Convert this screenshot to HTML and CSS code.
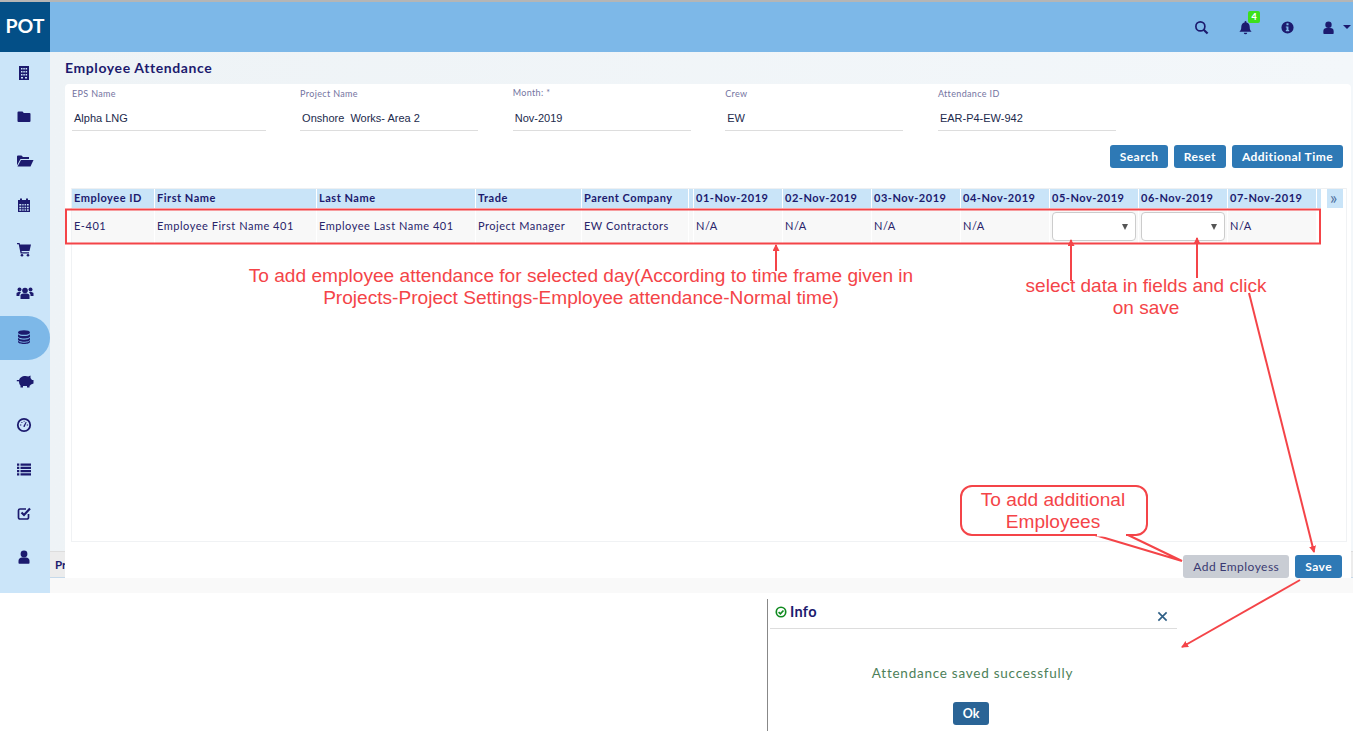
FILE: index.html
```html
<!DOCTYPE html>
<html lang="en">
<head>
<meta charset="utf-8">
<title>Employee Attendance</title>
<link rel="stylesheet" href="styles.css">
</head>
<body>
<div class="app">
  <aside class="sidebar">
    <div class="logo">POT</div>
    <nav class="nav">
      <a class="nav-item"><svg class="ico" viewBox="0 0 16 16"><path fill-rule="evenodd" d="M3 1h10v14H3zM5 3v1.5h1.500V3zM7.300 3v1.500h1.500V3zM9.600 3v1.500h1.500V3zM5 6v1.500h1.500V6zM7.300 6v1.500h1.500V6zM9.600 6v1.500h1.500V6zM5 9v1.500h1.500V9zM7.300 9v1.500h1.500V9zM9.600 9v1.500h1.500V9zM5 12v1.500h2V12zM9 12v1.500h2V12z"/></svg></a>
      <a class="nav-item"><svg class="ico" viewBox="0 0 16 16"><path d="M1.500 3.500a1 1 0 0 1 1-1h4l1.300 1.500h5.700a1 1 0 0 1 1 1v7a1 1 0 0 1-1 1h-11a1 1 0 0 1-1-1z"/></svg></a>
      <a class="nav-item"><svg class="ico ico-wide" viewBox="0 0 18 16"><path d="M1 12.500V3.500a1 1 0 0 1 1-1h3.500L7 4h6v2H4.500z"/><path d="M5 7h12.500l-3 6.500H1.500z"/></svg></a>
      <a class="nav-item"><svg class="ico" viewBox="0 0 16 16"><path fill-rule="evenodd" d="M2 3h2V1.500h2V3h4V1.500h2V3h2v12H2zM3.300 7v1.600h2V7zM6.300 7v1.600h1.300V7zM8.600 7v1.600h1.300V7zM10.900 7v1.600h1.800V7zM3.300 9.700v1.600h2V9.700zM6.300 9.700v1.600h1.300V9.700zM8.600 9.700v1.600h1.300V9.700zM10.900 9.700v1.600h1.800V9.700zM3.300 12.300v1.500h2v-1.500zM6.300 12.300v1.500h1.300v-1.500zM8.600 12.300v1.500h1.300v-1.500zM10.900 12.300v1.500h1.800v-1.500z"/></svg></a>
      <a class="nav-item"><svg class="ico" viewBox="0 0 16 16"><path d="M1 2h2.600l.4 1.500h11l-1.500 6.500H5.500l.3 1.300H13v1.200H4.600L2.700 3.200H1z"/><circle cx="6" cy="14.300" r="1.300"/><circle cx="12" cy="14.300" r="1.300"/></svg></a>
      <a class="nav-item"><svg class="ico ico-wide" viewBox="0 0 18 16"><circle cx="9" cy="5.500" r="2.800"/><circle cx="3.500" cy="4.500" r="2"/><circle cx="14.500" cy="4.500" r="2"/><path d="M4.500 14v-3.500C4.500 9 6 8.500 9 8.500s4.500.5 4.500 2V14z"/><path d="M0.500 11V8.500C.5 7.500 2 7 3.500 7H5L3.500 9.500V11zM17.500 11V8.500c0-1-1.500-1.500-3-1.500H13l1.500 2.500V11z"/></svg></a>
      <a class="nav-item nav-active"><svg class="ico" viewBox="0 0 16 16"><ellipse cx="8" cy="3.500" rx="6" ry="2.300"/><path d="M2 5.200c1 1.300 3.300 1.900 6 1.900s5-.6 6-1.900v2c0 1.300-2.700 2.300-6 2.300s-6-1-6-2.300z"/><path d="M2 8.800c1 1.300 3.300 1.900 6 1.900s5-.6 6-1.900v1.600c0 1.300-2.700 2.300-6 2.300s-6-1-6-2.300z"/><path d="M2 11.800c1 1.300 3.300 1.900 6 1.900s5-.6 6-1.900v1c0 1.300-2.700 2.300-6 2.300s-6-1-6-2.300z"/></svg></a>
      <a class="nav-item"><svg class="ico ico-wide" viewBox="0 0 18 16"><path d="M3 8c0-3 3-5 6.500-5 1 0 2 .2 2.800.5L14.500 2.500V5l1.500 2h1.500v3.500L15 11.500 13.500 13v1.500h-2.500V13H7v1.500H4.500V12.500C3.500 11.500 3 10 3 8z"/><path d="M.8 7h2.700v1.300H.8z"/></svg></a>
      <a class="nav-item"><svg class="ico" viewBox="0 0 16 16"><circle cx="8" cy="8" r="6.200" fill="none" stroke-width="1.800" class="ico-stroke"/><path d="M7.300 9.200 9.800 4.800l.8.400-2 4.700a1 1 0 0 1-1.300-.7z"/><path d="M4 7.500h1.300v1H4zM10.800 7.500h1.300v1h-1.300zM5.400 5h1v1h-1zM7.600 3.800h1v1h-1z"/></svg></a>
      <a class="nav-item"><svg class="ico" viewBox="0 0 16 16"><path d="M1 2.500h2.300v2.200H1zM4.500 2.500h10.500v2.200H4.500zM1 5.800h2.300V8H1zM4.500 5.800h10.500V8H4.500zM1 9h2.300v2.200H1zM4.500 9h10.500v2.200H4.500zM1 12.300h2.300v2.200H1zM4.500 12.300h10.500v2.200H4.500z"/></svg></a>
      <a class="nav-item"><svg class="ico" viewBox="0 0 16 16"><path class="ico-stroke" fill="none" stroke-width="1.700" d="M12.500 9v3.500a1.500 1.500 0 0 1-1.500 1.500H4a1.500 1.500 0 0 1-1.500-1.500V5.500A1.500 1.500 0 0 1 4 4h6"/><path class="ico-stroke" fill="none" stroke-width="2.200" d="M5.500 7.500 8 10l6-6.500"/></svg></a>
      <a class="nav-item"><svg class="ico" viewBox="0 0 16 16"><circle cx="8" cy="5" r="3.400"/><path d="M2.500 14v-2.200C2.500 9.800 4 8.500 6 8.500h4c2 0 3.500 1.300 3.500 3.300V14a.8.8 0 0 1-.8.8H3.300a.8.8 0 0 1-.8-.8z"/></svg></a>
    </nav>
  </aside>
  <div class="main">
    <header class="topbar">
      <svg class="top-ico top-search" viewBox="0 0 16 16"><circle class="ico-stroke" cx="6.800" cy="6.800" r="4.800" fill="none" stroke-width="1.800"/><path class="ico-stroke" fill="none" stroke-width="2.300" d="M10.300 10.300 14.500 14.500"/></svg>
      <span class="bell-wrap">
        <svg class="top-ico" viewBox="0 0 16 16"><path d="M8 1a1 1 0 0 1 1 1v.6c2.300.5 3.500 2.300 3.500 4.900 0 2.500.6 3.800 2 5H1.500c1.400-1.200 2-2.500 2-5 0-2.600 1.200-4.400 3.500-4.900V2a1 1 0 0 1 1-1z"/><path d="M6.200 13.500h3.600a1.800 1.800 0 0 1-3.600 0z"/></svg>
        <span class="badge">4</span>
      </span>
      <svg class="top-ico top-info" viewBox="0 0 16 16"><path fill-rule="evenodd" d="M8 1.500a6.500 6.500 0 1 1 0 13 6.500 6.500 0 0 1 0-13zM6.900 3.500v2h2.200v-2zM6.200 6.800V8h.8v2.700h-.8v1.300h3.600v-1.300h-.8V6.800z"/></svg>
      <svg class="top-ico top-user" viewBox="0 0 16 16"><circle cx="8" cy="5" r="3.400"/><path d="M2.500 14v-2.200C2.500 9.800 4 8.500 6 8.500h4c2 0 3.500 1.300 3.500 3.300V14a.8.8 0 0 1-.8.8H3.300a.8.8 0 0 1-.8-.8z"/></svg>
      <span class="caret"></span>
    </header>
    <h1 class="page-title">Employee Attendance</h1>
    <div class="content">
      <div class="gutter"><span class="tab">Pr</span></div>
      <section class="card">
        <div class="filters">
          <div class="field"><label class="field-label">EPS Name</label><div class="field-value">Alpha LNG</div></div>
          <div class="field"><label class="field-label">Project Name</label><div class="field-value">Onshore&nbsp; Works- Area 2</div></div>
          <div class="field"><label class="field-label field-label-up">Month: *</label><div class="field-value">Nov-2019</div></div>
          <div class="field"><label class="field-label">Crew</label><div class="field-value">EW</div></div>
          <div class="field"><label class="field-label">Attendance ID</label><div class="field-value">EAR-P4-EW-942</div></div>
        </div>
        <div class="actions">
          <button class="btn btn-search">Search</button>
          <button class="btn">Reset</button>
          <button class="btn">Additional Time</button>
        </div>
        <div class="table-box">
          <div class="t-row t-head">
            <div>Employee ID</div><div>First Name</div><div>Last Name</div><div>Trade</div><div>Parent Company</div><div></div>
            <div>01-Nov-2019</div><div>02-Nov-2019</div><div>03-Nov-2019</div><div>04-Nov-2019</div><div>05-Nov-2019</div><div>06-Nov-2019</div><div>07-Nov-2019</div><div></div><div class="t-blank"></div><div class="t-more">»</div>
          </div>
          <div class="t-row t-body">
            <div>E-401</div><div>Employee First Name 401</div><div>Employee Last Name 401</div><div>Project Manager</div><div>EW Contractors</div><div></div>
            <div>N/A</div><div>N/A</div><div>N/A</div><div>N/A</div>
            <div class="t-select-cell"><span class="t-select"></span></div>
            <div class="t-select-cell"><span class="t-select"></span></div>
            <div>N/A</div>
          </div>
        </div>
        <div class="footer-actions">
          <button class="btn btn-grey">Add Employess</button>
          <button class="btn">Save</button>
        </div>
      </section>
      <div class="gutter gutter-right"><span class="tab"></span></div>
    </div>
    <div class="strip"></div>
  </div>
</div>

<div class="below">
  <section class="modal">
    <div class="modal-head">
      <svg class="check" viewBox="0 0 16 16"><circle cx="8" cy="8" r="6.300" fill="none" stroke="#0f8a1f" stroke-width="2.200"/><path d="M4.800 8.200 7.200 10.500 11.300 5.900" fill="none" stroke="#0f8a1f" stroke-width="2.200"/></svg>
      <span class="modal-title">Info</span>
      <svg class="close" viewBox="0 0 12 12"><path d="M1.500 1.500 10.500 10.500M10.500 1.500 1.500 10.500" fill="none" stroke="#2f5f86" stroke-width="1.800"/></svg>
    </div>
    <p class="modal-msg">Attendance saved successfully</p>
    <div class="modal-foot"><button class="btn btn-ok">Ok</button></div>
  </section>
</div>

<div class="overlay">
  <svg class="marks" viewBox="0 0 1353 731" width="1353" height="731">
    <defs>
      <marker id="head" markerWidth="8" markerHeight="8" refX="6" refY="3.500" orient="auto" markerUnits="userSpaceOnUse"><path d="M0 0 7 3.500 0 7z" fill="#f44448"/></marker>
    </defs>
    <rect x="66" y="209.500" width="1254" height="34" fill="none" stroke="#f44448" stroke-width="2"/>
    <g fill="none" stroke="#f44448" stroke-width="2">
      <path d="M776 271V245" marker-end="url(#head)"/>
      <path d="M1071 281V240" marker-end="url(#head)"/>
      <path d="M1197 278V238" marker-end="url(#head)"/>
      <path d="M1249 293 1314 552" marker-end="url(#head)"/>
      <path d="M1300 580 1182 647" marker-end="url(#head)"/>
      <path d="M1095 535 1182 561 1128 535"/>
    </g>
    <rect x="961" y="486" width="186" height="49" rx="11" fill="#fff" stroke="#f44448" stroke-width="2"/>
    <path d="M1097 535H1126" stroke="#fff" stroke-width="3"/>
  </svg>
  <p class="note note-main">To add employee attendance for selected day(According to time frame given in<br>Projects-Project Settings-Employee attendance-Normal time)</p>
  <p class="note note-select">select data in fields and click<br>on save</p>
  <p class="note note-callout">To add additional<br>Employees</p>
</div>
</body>
</html>
```
FILE: styles.css
```css
* { box-sizing: border-box; }
html, body { margin: 0; padding: 0; }
body {
  position: relative;
  width: 1353px;
  height: 731px;
  overflow: hidden;
  background: #fff;
  font-family: Lato, "Open Sans", sans-serif;
  color: #1c1a6e;
}
.app {
  display: flex;
  height: 593px;
  border-top: 2px solid #b5b5b5;
}
.sidebar {
  width: 50px;
  flex: none;
  background: #cbe5f9;
}
.logo {
  height: 50px;
  background: #034f87;
  color: #fff;
  font-size: 19.500px;
  font-weight: 700;
  line-height: 48px;
  text-align: center;
}
.nav { display: flex; flex-direction: column; }
.nav-item {
  display: flex;
  height: 44px;
  padding-bottom: 2px;
  align-items: center;
  justify-content: center;
}
.nav-active {
  background: #7db8e8;
  border-radius: 0 22px 22px 0;
}
.ico { width: 16px; height: 16px; margin-right: 2px; fill: #1c1a6e; flex: none; }
.ico-wide { width: 18px; margin-right: 0; }
.ico-stroke { stroke: #1c1a6e; }
.main {
  flex: 1;
  min-width: 0;
  display: flex;
  flex-direction: column;
  background: linear-gradient(90deg, #eef3f6, #f3f7fa);
}
.topbar {
  height: 50px;
  flex: none;
  background: #7db8e8;
  display: flex;
  align-items: center;
  padding-right: 2px;
  justify-content: flex-end;
}
.top-ico { width: 15px; height: 15px; fill: #1c1a6e; flex: none; }
.top-search { margin-right: 29px; }
.bell-wrap { position: relative; display: flex; margin-right: 27px; }
.top-info { margin-right: 26px; }
.top-user { margin-right: 7px; }
.badge {
  position: absolute;
  left: 10px;
  top: -9px;
  width: 12px;
  height: 12px;
  border-radius: 2px;
  background: #3de01a;
  color: #fff;
  font-size: 9px;
  font-weight: 900;
  line-height: 12px;
  text-align: center;
}
.caret {
  width: 0;
  height: 0;
  border-left: 4px solid transparent;
  border-right: 4px solid transparent;
  border-top: 4px solid #1c1a6e;
}
.page-title {
  margin: 0;
  height: 32px;
  padding: 7px 0 0 15px;
  font-size: 14px;
  font-weight: 700;
  line-height: 17px;
  letter-spacing: .6px;
}
.content { flex: 1; display: flex; min-height: 0; }
.gutter {
  width: 15px;
  flex: none;
  display: flex;
  align-items: flex-end;
  overflow: hidden;
}
.gutter-right { width: 2px; }
.tab {
  flex: none;
  width: 15px;
  height: 27px;
  padding-left: 5px;
  background: #ececec;
  border-bottom: 1px solid #c5d9ea;
  border-top: 1px solid #ddd;
  font-size: 11.500px;
  font-weight: 700;
  line-height: 25px;
  white-space: nowrap;
}
.card {
  flex: 1;
  min-width: 0;
  display: flex;
  flex-direction: column;
  background: #fff;
  border-radius: 4px 4px 0 0;
  padding: 0 4px 0 6px;
}
.filters {
  display: grid;
  grid-template-columns: 193.500px 178px 178px 178px 178px;
  column-gap: 34.600px;
  padding-left: 1px;
  padding-top: 4px;
  height: 61px;
}
.field { display: flex; flex-direction: column; }
.field-label {
  height: 14px;
  font-size: 9px;
  line-height: 12px;
  color: #74749f;
  letter-spacing: .35px;
}
.field-label-up { margin-top: -1px; margin-bottom: 1px; }
.field-value {
  height: 29px;
  padding: 9px 2px 0;
  border-bottom: 1px solid #ddd;
  font-family: "Liberation Sans", Arial, sans-serif;
  font-size: 11px;
  line-height: 14px;
  color: #222a4c;
}
.actions {
  display: flex;
  justify-content: flex-end;
  gap: 6px;
  padding-right: 4px;
  height: 43px;
}
.btn {
  height: 23px;
  padding: 0 10px;
  border: 0;
  border-radius: 3px;
  background: #2e79b5;
  color: #fff;
  font-family: Lato, sans-serif;
  font-size: 12px;
  font-weight: 700;
  letter-spacing: .45px;
  line-height: 23px;
}
.btn-search { padding: 0 9.500px; }
.table-box {
  height: 354px;
  flex: none;
  border: 1px solid #f0f2f4;
  border-top: 0;
}
.t-row {
  display: grid;
  grid-template-columns: 82px 161px 158px 105px 106px 4px repeat(7, 88px) 4px 4px 16px;
  column-gap: 1px;
  font-size: 11px;
  letter-spacing: .52px;
}
.t-head {
  height: 20px;
  margin-bottom: 1px;
  border-top: 1px solid #eef0f2;
  font-weight: 700;
}
.t-head > div {
  background: #c9e4f8;
  padding: 0 2px;
  line-height: 18px;
  white-space: nowrap;
  overflow: hidden;
}
.t-head > .t-blank { background: #fff; }
.t-head > .t-more {
  padding: 0 0 0 3px;
  overflow: visible;
  font-size: 17px;
  font-weight: 400;
  line-height: 17px;
  color: #4d6f9e;
}
.t-body { height: 35px; font-weight: 400; color: #28246a; }
.t-body > div {
  background: #f8f8f8;
  padding: 0 2px;
  line-height: 33px;
  white-space: nowrap;
}
.t-body > .t-select-cell { padding: 3px 2px; }
.t-select {
  position: relative;
  display: block;
  width: 84px;
  height: 29px;
  background: #fff;
  border: 1px solid #ccc;
  border-radius: 4px;
}
.t-select::after {
  content: "";
  position: absolute;
  right: 7px;
  top: 11px;
  border-left: 3px solid transparent;
  border-right: 3px solid transparent;
  border-top: 6px solid #555;
}
.footer-actions {
  display: flex;
  justify-content: flex-end;
  gap: 6px;
  padding-right: 5px;
  padding-top: 13px;
}
.btn-grey {
  background: #c9cdd4;
  color: #3a3a72;
  font-weight: 400;
}
.strip { height: 15px; flex: none; background: #f9f9f9; }
.below {
  height: 138px;
  padding: 6px 0 0 767px;
}
.modal {
  width: 410px;
  height: 132px;
  border-left: 1px solid #888;
}
.modal-head {
  display: flex;
  align-items: center;
  gap: 3px;
  height: 30px;
  margin-left: 2px;
  padding: 0 9px 4px 5px;
  border-bottom: 1px solid #ddd;
}
.check { width: 12px; height: 12px; }
.modal-title { flex: 1; font-size: 14.500px; font-weight: 700; letter-spacing: .3px; line-height: 26px; }
.close { width: 11px; height: 11px; margin-top: 9px; }
.modal-msg {
  margin: 36px 0 0;
  text-align: center;
  font-size: 13.500px;
  line-height: 16px;
  letter-spacing: .75px;
  color: #4d7f59;
}
.modal-foot { display: flex; justify-content: center; margin-top: 21px; padding-right: 3px; }
.btn-ok { width: 36px; height: 23px; padding: 0; background: #2a6496; font-size: 12.500px; letter-spacing: 0; }
.overlay {
  position: absolute;
  inset: 0;
  pointer-events: none;
}
.marks { position: absolute; left: 0; top: 0; display: block; }
.note {
  position: absolute;
  margin: 0;
  font-family: "Liberation Sans", Arial, sans-serif;
  font-size: 19.100px;
  line-height: 22px;
  text-align: center;
  color: #f44448;
  white-space: nowrap;
}
.note-main { left: 231px; width: 700px; top: 265px; }
.note-select { left: 996px; width: 300px; top: 275px; font-size: 19px; }
.note-callout { left: 960px; width: 186px; top: 489px; }
```
